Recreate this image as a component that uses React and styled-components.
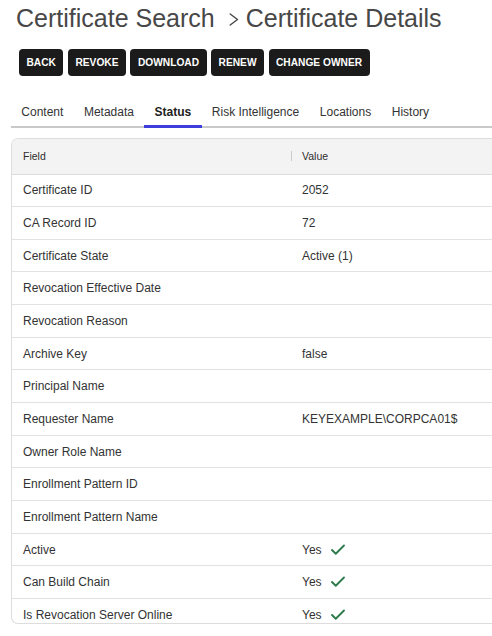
import styled, { createGlobalStyle } from 'styled-components';
import { Check } from 'lucide-react';

const GlobalStyle = createGlobalStyle`
  body {
    margin: 0;
    background: #ffffff;
    overflow: hidden;
    font-family: "Liberation Sans", Arial, sans-serif;
    color: #333333;
  }
`;

const tabs = ['Content', 'Metadata', 'Status', 'Risk Intelligence', 'Locations', 'History'];
const actions = ['Back', 'Revoke', 'Download', 'Renew', 'Change Owner'];

const statusRows = [
  { field: 'Certificate ID', value: '2052' },
  { field: 'CA Record ID', value: '72' },
  { field: 'Certificate State', value: 'Active (1)' },
  { field: 'Revocation Effective Date', value: '' },
  { field: 'Revocation Reason', value: '' },
  { field: 'Archive Key', value: 'false' },
  { field: 'Principal Name', value: '' },
  { field: 'Requester Name', value: 'KEYEXAMPLE\\CORPCA01$' },
  { field: 'Owner Role Name', value: '' },
  { field: 'Enrollment Pattern ID', value: '' },
  { field: 'Enrollment Pattern Name', value: '' },
  { field: 'Active', value: 'Yes', ok: true },
  { field: 'Can Build Chain', value: 'Yes', ok: true },
  { field: 'Is Revocation Server Online', value: 'Yes', ok: true },
];

const Chevron = () => (
  <svg width="10" height="13" viewBox="0 0 10 13" fill="none">
    <polyline points="1.2,1 8.5,6.5 1.2,12" stroke="#474747" strokeWidth="1.4" strokeLinecap="round" strokeLinejoin="round" />
  </svg>
);

export default function App() {
  return (
    <Page>
      <GlobalStyle />
      <Breadcrumb>
        <span>Certificate Search</span>
        <Separator><Chevron /></Separator>
        <span>Certificate Details</span>
      </Breadcrumb>

      <Toolbar>
        {actions.map((label) => (
          <ActionButton key={label}>{label}</ActionButton>
        ))}
      </Toolbar>

      <TabList>
        {tabs.map((tab) => (
          <Tab key={tab} active={tab === 'Status'}>{tab}</Tab>
        ))}
      </TabList>

      <TableFrame>
        <HeaderRow>
          <FieldCell>Field</FieldCell>
          <ValueCell divided>Value</ValueCell>
        </HeaderRow>
        {statusRows.map((row) => (
          <Row key={row.field}>
            <FieldCell>{row.field}</FieldCell>
            <ValueCell>
              {row.value}
              {row.ok && <CheckMark size={18} strokeWidth={2.5} />}
            </ValueCell>
          </Row>
        ))}
      </TableFrame>
    </Page>
  );
}

const Page = styled.div`
  padding: 3px 0 0 11px;
`;

const Breadcrumb = styled.h1`
  margin: 0;
  padding-left: 5px;
  display: flex;
  align-items: center;
  font-size: 25px;
  line-height: 30px;
  font-weight: 400;
  color: #474747;
  white-space: nowrap;
`;

const Separator = styled.span`
  display: inline-flex;
  margin: 3px 7px 0 14px;
`;

const Toolbar = styled.div`
  display: flex;
  gap: 4.5px;
  margin: 16px 0 0 8px;
`;

const ActionButton = styled.button`
  height: 27px;
  padding: 0 7.5px;
  border: none;
  border-radius: 4px;
  background: #1b1b1b;
  color: #ffffff;
  font-family: "Liberation Sans", Arial, sans-serif;
  font-size: 10.2px;
  font-weight: 700;
  text-transform: uppercase;
  cursor: pointer;
`;

const TabList = styled.div`
  display: flex;
  margin-top: 22px;
  border-bottom: 2px solid #c9c9c9;
`;

const Tab = styled.div`
  height: 27px;
  padding: 0 10.3px;
  margin-bottom: -2px;
  display: flex;
  align-items: center;
  font-size: 12px;
  font-weight: ${({ active }) => (active ? 700 : 400)};
  color: ${({ active }) => (active ? '#222222' : '#333333')};
  border-bottom: 3px solid ${({ active }) => (active ? '#3e3edb' : 'transparent')};
`;

const TableFrame = styled.div`
  margin-top: 10px;
  width: 100%;
  height: 486px;
  box-sizing: border-box;
  border: 1px solid #dddddd;
  border-right: none;
  border-radius: 7px 0 0 7px;
  overflow: hidden;
`;

const Row = styled.div`
  display: flex;
  align-items: center;
  height: 32.66px;
  box-sizing: border-box;
  border-bottom: 1px solid #e2e2e2;
  font-size: 12px;
  color: #333333;
`;

const HeaderRow = styled(Row)`
  height: 35.5px;
  background: #f3f3f3;
  border-bottom-color: #dcdcdc;
  font-size: 10.5px;
  color: #2e2e2e;
`;

const FieldCell = styled.div`
  width: 279px;
  flex-shrink: 0;
  padding-left: 11px;
  box-sizing: border-box;
  white-space: nowrap;
`;

const ValueCell = styled.div`
  position: relative;
  flex: 1;
  display: flex;
  align-items: center;
  padding-left: 11px;
  white-space: nowrap;

  &::before {
    content: '';
    display: ${({ divided }) => (divided ? 'block' : 'none')};
    position: absolute;
    left: 0;
    top: 50%;
    width: 1px;
    height: 10px;
    margin-top: -5px;
    background: #cccccc;
  }
`;

const CheckMark = styled(Check)`
  margin-left: 7px;
  color: #2d7a4c;
`;
